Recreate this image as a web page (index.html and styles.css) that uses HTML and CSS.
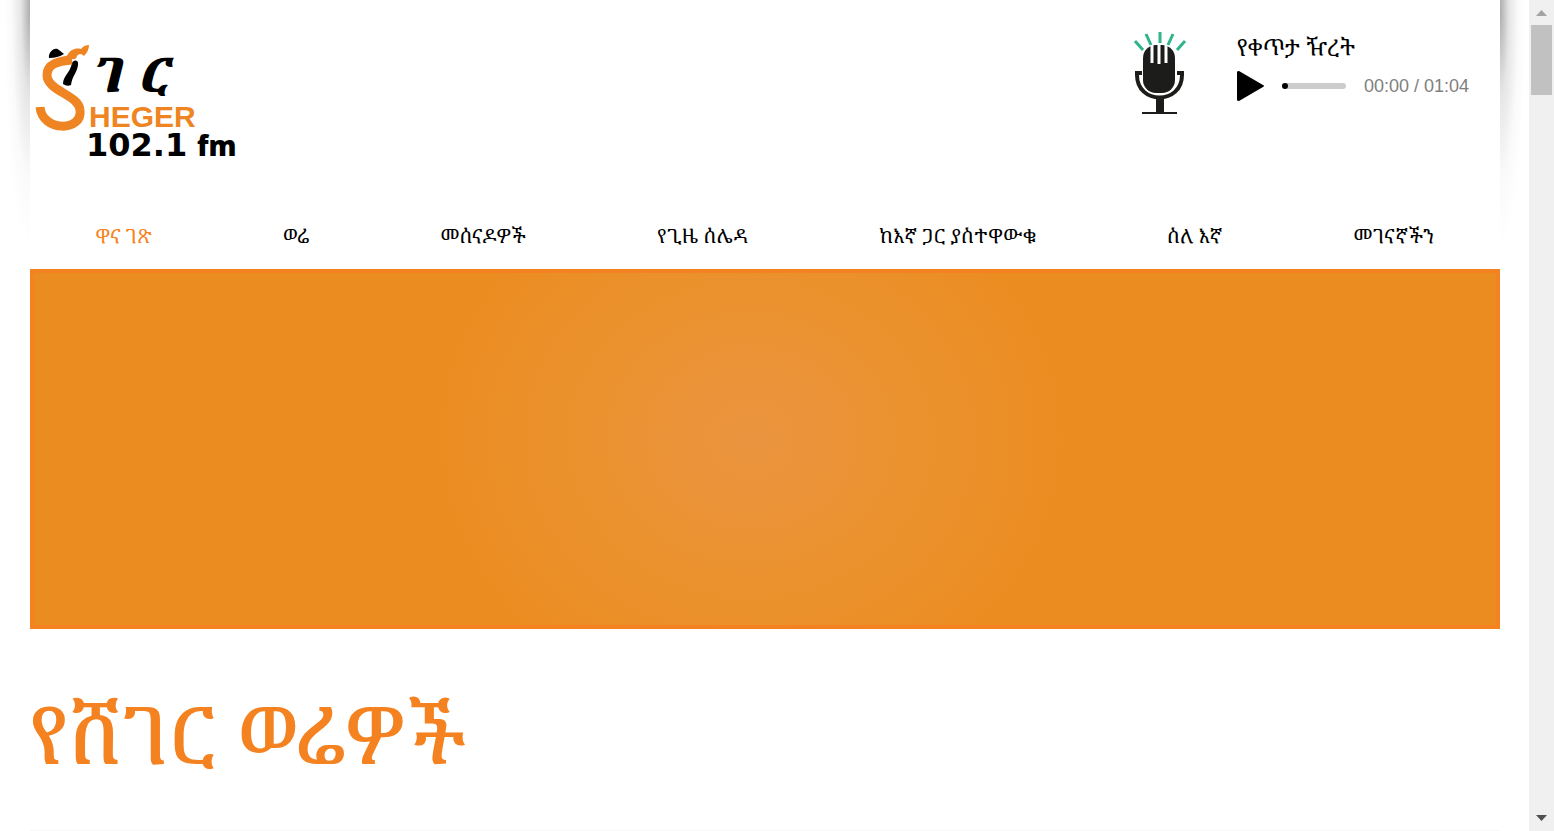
FILE: index.html
```html
<!DOCTYPE html>
<html lang="am">
<head>
<meta charset="utf-8">
<meta name="viewport" content="width=device-width, initial-scale=1">
<title>Sheger 102.1 FM</title>
<link rel="stylesheet" href="styles.css">
</head>
<body>
<div class="page">
  <div class="site">
    <header class="header">
      <a class="logo" href="#" aria-label="Sheger 102.1 fm">
        <svg width="210" height="126" viewBox="0 0 210 126">
          <g class="ink">
            <path d="M19 19C18 13 25 7 29 11L34 15Q28 19 19 19Z"/>
            <path d="M42 24C43 21 49 20 48 26C47 34 42 37 41 46Q37 48 33 45C33 37 40 34 42 24Z"/>
          </g>
          <path class="swoosh" d="M10 68C12 93 53 93 50 71C49 56 17 52 17 36C17 25 28 22 42 21"/>
          <path class="crest" d="M36 19C40 9 47 9 51 10Q54 6 59 6Q59 12 54 17Q50 13 47 17Q46 21 42 20L37 25Z"/>
          <text class="logo-am" x="60" y="53">ገ</text>
          <text class="logo-am" x="107" y="53">ር</text>
          <text class="logo-name" x="59" y="88">HEGER</text>
          <text class="logo-num" x="56" y="117">102.1</text>
          <text class="logo-fm" x="167" y="117">fm</text>
        </svg>
      </a>
      <section class="live">
        <svg class="mic" width="54" height="86" viewBox="0 0 54 86" aria-hidden="true">
          <g class="rays"><path d="M2 11L10 20"/><path d="M13 4L18 15"/><path d="M27 2V13"/><path d="M40 4L35 15"/><path d="M52 11L44 20"/></g>
          <rect class="capsule" x="10" y="15" width="32" height="48" rx="13"/>
          <path class="slots" d="M19 15V33M26 15V34M33 15V33"/>
          <path class="cradle" d="M9 43H4V45C4 75 49 75 49 45V43H44"/>
          <path class="stem" d="M27 68V82"/>
          <path class="foot" d="M9 83H44"/>
        </svg>
        <div class="player">
          <p class="track">የቀጥታ ዥረት</p>
          <div class="controls">
            <button class="play" type="button" aria-label="Play">
              <svg width="27" height="30" viewBox="0 0 27 30"><path d="M0 1Q0 0 2 0L26 14Q28 15 26 16L2 30Q0 30 0 29Z"/></svg>
            </button>
            <input class="seek" type="range" min="0" max="64" value="0" aria-label="Seek">
            <span class="time">00:00 / 01:04</span>
          </div>
        </div>
      </section>
    </header>
    <nav class="nav">
      <a class="current" href="#">ዋና ገጽ</a>
      <a href="#">ወሬ</a>
      <a href="#">መሰናዶዎች</a>
      <a href="#">የጊዜ ሰሌዳ</a>
      <a href="#">ከእኛ ጋር ያስተዋውቁ</a>
      <a href="#">ስለ እኛ</a>
      <a href="#">መገናኛችን</a>
    </nav>
    <main>
      <div class="banner"></div>
      <h1 class="title">የሸገር ወሬዎች</h1>
      <hr class="rule">
    </main>
  </div>
</div>
<div class="scrollbar" aria-hidden="true">
  <svg width="11" height="6" viewBox="0 0 11 6"><path fill="#a3a3a3" d="M0 6L5.500 0L11 6Z"/></svg>
  <div class="thumb"></div>
  <svg width="11" height="6" viewBox="0 0 11 6"><path fill="#505050" d="M0 0L5.500 6L11 0Z"/></svg>
</div>
</body>
</html>
```
FILE: styles.css
```css
* { box-sizing: border-box; }
body {
  margin: 0;
  height: 100vh;
  display: flex;
  overflow: hidden;
  background: #fff;
  color: #000;
  font-family: "Noto Serif Ethiopic", "Abyssinica SIL", "Noto Sans Ethiopic", "Liberation Serif", serif;
}
.page {
  flex: 1;
  min-width: 0;
  padding: 0 29px 0 30px;
  overflow: hidden;
  background:
    radial-gradient(ellipse 26px 240px at 30px 10px, rgba(0,0,0,.32), rgba(0,0,0,.1) 35%, rgba(0,0,0,.02) 70%, transparent) no-repeat,
    radial-gradient(ellipse 26px 240px at calc(100% - 29px) 10px, rgba(0,0,0,.32), rgba(0,0,0,.1) 35%, rgba(0,0,0,.02) 70%, transparent) no-repeat;
}
.site { background: #fff; min-height: 100%; }
.header {
  height: 204px;
  display: flex;
  justify-content: space-between;
  align-items: flex-start;
  padding: 30px 31px 0 0;
}
.logo { padding-top: 9px; }
.logo svg, .mic { display: block; }
.ink, .logo-am, .logo-num, .logo-fm { fill: #000; }
.swoosh { fill: none; stroke: #ef8522; stroke-width: 9; }
.crest, .logo-name { fill: #ef8522; }
.logo-am { font-size: 48px; font-weight: 900; font-style: italic; }
.logo-name { font: 700 30px "Liberation Sans", Arial, sans-serif; }
.logo-num { font: 700 32px "DejaVu Sans", sans-serif; }
.logo-fm { font: 800 28px "Open Sans", sans-serif; }
.live { display: flex; gap: 50px; }
.rays { stroke: #2fb58c; stroke-width: 3; }
.capsule { fill: #1c1c1a; }
.slots { fill: none; stroke: #fff; stroke-width: 3; }
.cradle { fill: none; stroke: #1c1c1a; stroke-width: 4; }
.stem { stroke: #1c1c1a; stroke-width: 8; }
.foot { stroke: #1c1c1a; stroke-width: 2; }
.track { margin: 0; font-size: 23px; line-height: 34px; }
.controls { display: flex; align-items: center; margin-top: 7px; }
.play { display: flex; border: 0; padding: 0; background: none; }
.seek {
  appearance: none;
  width: 64px;
  height: 6px;
  margin: 0 18px;
  border-radius: 3px;
  background: #ccc;
}
.seek::-webkit-slider-thumb { appearance: none; width: 6px; height: 6px; border-radius: 50%; background: #000; }
.time { font: 18px/30px "Liberation Sans", Arial, sans-serif; color: #808080; white-space: nowrap; }
.nav {
  height: 65px;
  padding-bottom: 2px;
  display: flex;
  justify-content: space-around;
  align-items: center;
  font-size: 20px;
  white-space: nowrap;
}
.nav a { color: #000; text-decoration: none; }
.nav .current { color: #f58320; }
.banner {
  height: 360px;
  border: 4px solid #f58220;
  background: radial-gradient(ellipse 320px 280px at 49% 47%, #ea9440, #eb922f 50%, #eb8c20);
}
.title {
  margin: 0;
  height: 201px;
  padding-top: 34px;
  color: #f58220;
  font-size: 80px;
  font-weight: 500;
  line-height: 140px;
  white-space: nowrap;
}
.rule { margin: 0; border: 0; height: 1px; background: #f7f7f7; }
.scrollbar {
  width: 25px;
  padding: 10px 2px;
  display: flex;
  flex-direction: column;
  align-items: center;
  background: #f0f0f0;
}
.thumb { width: 21px; height: 70px; margin: 9px 0 auto; background: #c1c1c1; }
```
